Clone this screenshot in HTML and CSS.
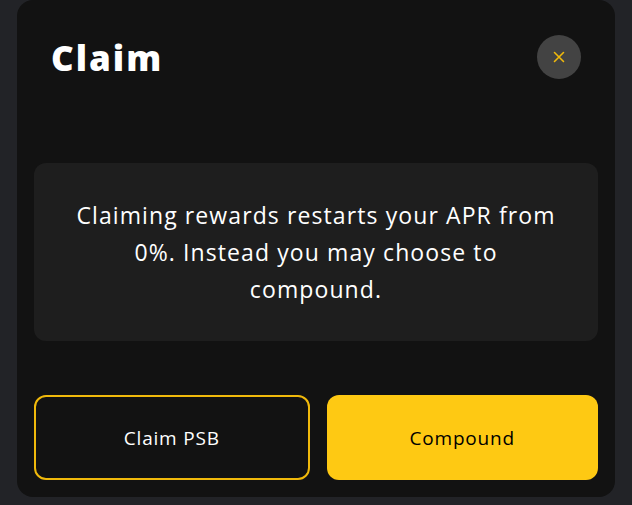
FILE: index.html
```html
<!DOCTYPE html>
<html lang="en">
<head>
  <meta charset="UTF-8" />
  <meta name="viewport" content="width=device-width, initial-scale=1.0"/>
  <title>Claim</title>
  <link rel="stylesheet" href="styles.css">
</head>
<body>
  <div class="modal">
    <div class="modal-head">
      <h1 class="modal-title">Claim</h1>
      <button class="close-btn" aria-label="Close">
        <svg width="12" height="12" viewBox="0 0 12 12">
          <path d="M1.5 1.5 L10.5 10.5 M10.5 1.5 L1.5 10.5" stroke="#f0b90b" stroke-width="1.6" stroke-linecap="round"/>
        </svg>
      </button>
    </div>

    <div class="info-box">
      <p>Claiming rewards restarts your APR from 0%. Instead you may choose to compound.</p>
    </div>

    <div class="actions">
      <button class="btn btn-outline">Claim PSB</button>
      <button class="btn btn-primary">Compound</button>
    </div>
  </div>
</body>
</html>
```

FILE: styles.css
```css
body {
  margin: 0;
  background: #222327;
  font-family: "Open Sans", "Noto Sans", sans-serif;
  color: #fff;
}

.modal {
  box-sizing: border-box;
  width: 598px;
  height: 497px;
  margin: 0 0 0 17px;
  padding: 35px 17px 17px;
  background: #121212;
  border-radius: 16px;
  display: flex;
  flex-direction: column;
}

.modal-head {
  display: flex;
  justify-content: space-between;
  align-items: center;
  height: 44px;
  padding: 0 17px;
}

.modal-title {
  margin: 0;
  font-size: 35px;
  font-weight: 800;
  letter-spacing: 2px;
}

.close-btn {
  width: 44px;
  height: 44px;
  border: none;
  border-radius: 50%;
  background: #434343;
  display: flex;
  align-items: center;
  justify-content: center;
  padding: 0;
  cursor: pointer;
}

.info-box {
  margin-top: 84px;
  height: 178px;
  background: #1e1e1e;
  border-radius: 12px;
  display: flex;
  align-items: center;
  justify-content: center;
  padding: 0 36px;
}

.info-box p {
  margin: 0;
  text-align: center;
  font-size: 23px;
  line-height: 37px;
  letter-spacing: 1.1px;
}

.actions {
  margin-top: 54px;
  display: flex;
  gap: 17px;
}

.btn {
  box-sizing: border-box;
  flex: 1 1 0;
  width: 0;
  height: 85px;
  border-radius: 12px;
  font-family: inherit;
  font-size: 19px;
  font-weight: 500;
  letter-spacing: 0.8px;
  cursor: pointer;
}

.btn-outline {
  background: #121212;
  color: #fff;
  border: 2px solid #f0b90b;
}

.btn-primary {
  background: #fec913;
  color: #000;
  border: none;
}
```
